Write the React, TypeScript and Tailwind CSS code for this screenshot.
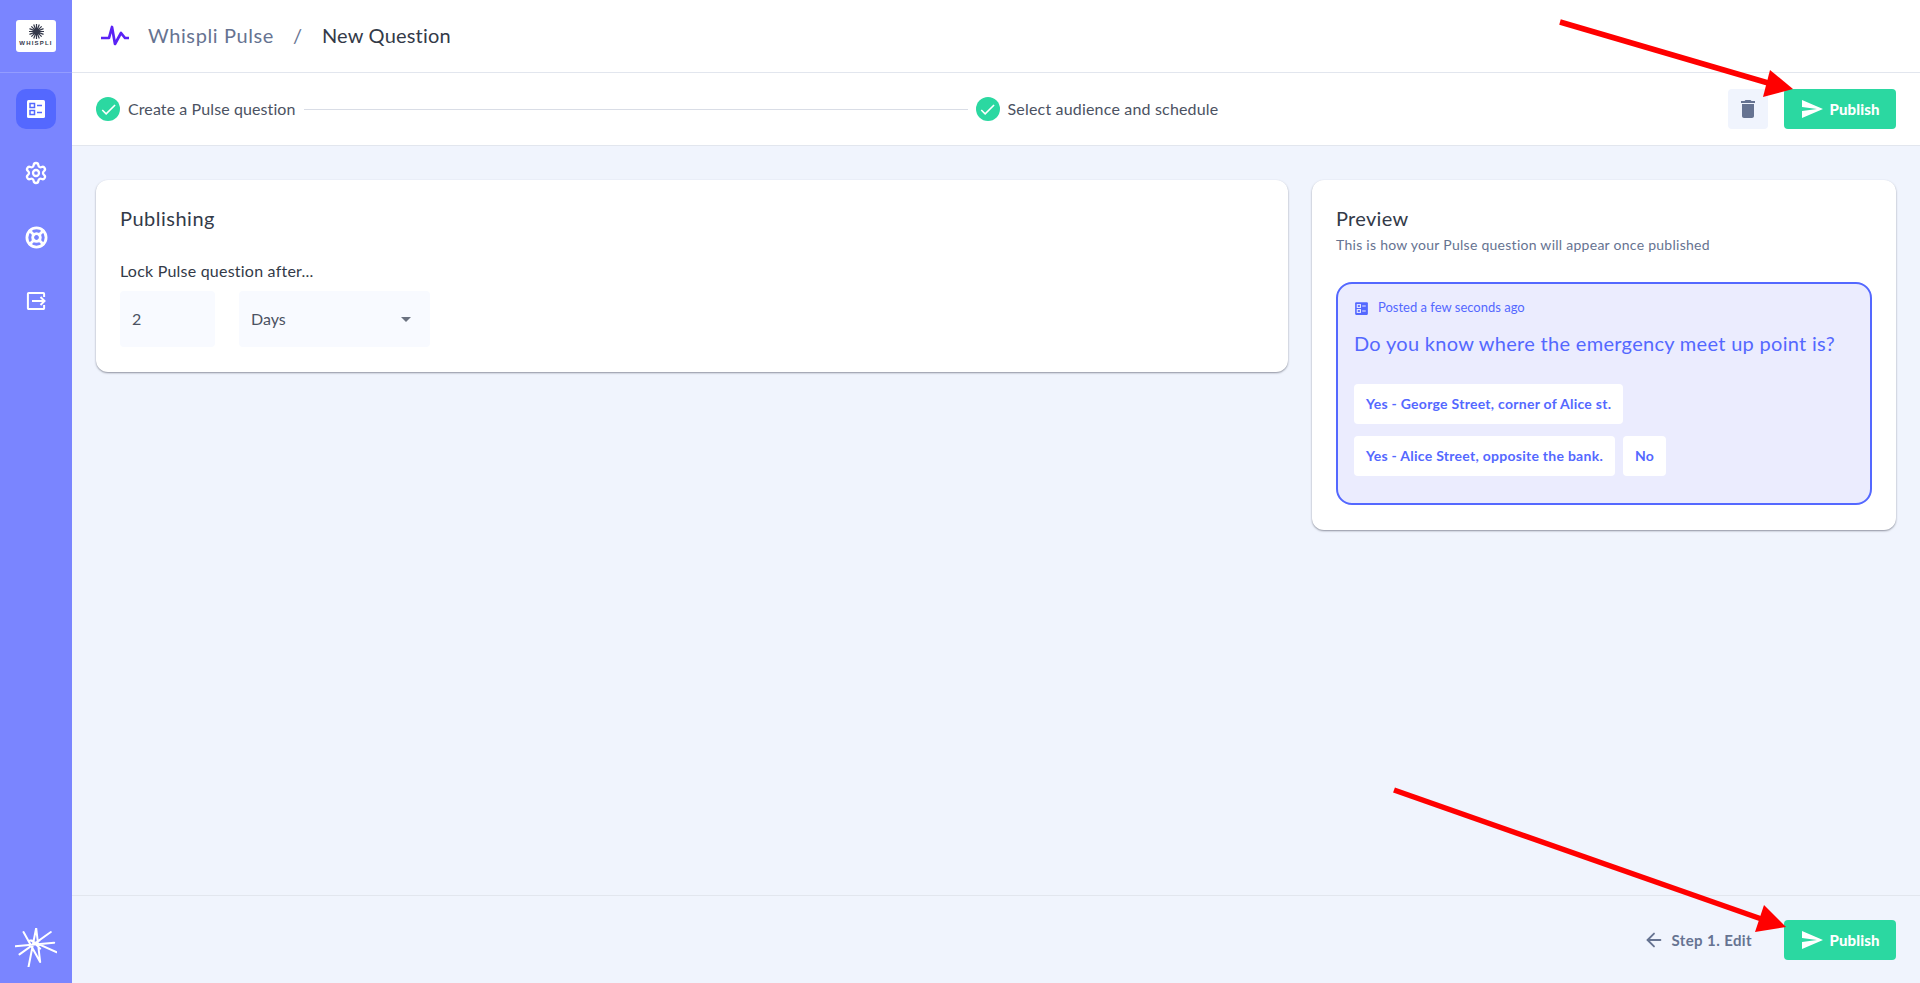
import { ArrowLeft, LifeBuoy, Settings } from 'lucide-react'
import { MdDelete, MdSend, MdArrowDropDown, MdCheck } from 'react-icons/md'

// ─── Small drawings ───────────────────────────────────────────────────────────
function BallotIcon({ size = 24, bg = '#ffffff', fg = '#5468ff' }: { size?: number; bg?: string; fg?: string }) {
  return (
    <svg width={size} height={size} viewBox="0 0 24 24">
      <rect x="3" y="3" width="18" height="18" rx="1.5" fill={bg} />
      <rect x="6" y="6.5" width="4.5" height="4" fill="none" stroke={fg} strokeWidth="1.5" />
      <rect x="6" y="13.5" width="4.5" height="4" fill="none" stroke={fg} strokeWidth="1.5" />
      <path d="M13 8.5h5M13 15.5h5" stroke={fg} strokeWidth="1.7" />
    </svg>
  )
}

function ExitIcon() {
  return (
    <svg width="24" height="24" viewBox="0 0 24 24" fill="none" stroke="#ffffff" strokeWidth="2">
      <path d="M20.1 8V4.7a.8.8 0 0 0-.8-.8H4.7a.8.8 0 0 0-.8.8v14.6a.8.8 0 0 0 .8.8h14.6a.8.8 0 0 0 .8-.8V16" />
      <path d="M8 12h13M16.5 8l4 4-4 4" />
    </svg>
  )
}

function PulseLogo() {
  return (
    <svg width="30" height="22" viewBox="0 0 30 22" fill="none" stroke="#5a22f5" strokeWidth="2.7" strokeLinejoin="round">
      <path d="M1 14h8l3-11 3 17 6-11 4 5h4" />
    </svg>
  )
}

function StarMark() {
  return (
    <svg width="42" height="39" viewBox="45 143 125 117" fill="none" stroke="#ffffff" strokeWidth="6" strokeLinecap="round">
      <path d="M70 155l50 90M108 143l-23 117M152 155L58 222M45 198l117-11M170 216L90 180M108 143l12 102M95 180l25 25M88 200l30-20" />
    </svg>
  )
}

function LogoBadge() {
  return (
    <div className="flex h-8 w-10 flex-col items-center justify-start rounded-[3px] bg-white pt-[4px]">
      <svg width="15" height="15" viewBox="0 0 16 16" fill="none" stroke="#33384a" strokeWidth="1.3">
        <path d="M8 0v16M0 8h16M2.5 2.5l11 11M13.5 2.5l-11 11M5 .5l6 15M11 .5l-6 15M.5 5l15 6M.5 11l15-6" />
      </svg>
      <span className="mt-[1px] text-[6px] leading-[7px] font-black tracking-[1.2px] text-[#33384a] [font-family:'Liberation_Sans',sans-serif]">
        WHISPLI
      </span>
    </div>
  )
}

function CheckCircle() {
  return (
    <span className="flex h-6 w-6 flex-none items-center justify-center rounded-full bg-[#2bd8a1] text-white">
      <MdCheck size={19} />
    </span>
  )
}

function PublishButton() {
  return (
    <button className="flex h-10 w-28 items-center justify-center gap-[5px] rounded bg-[#2bd8a1] text-[15px] font-black tracking-[0.1px] text-white">
      <MdSend size={24} />
      Publish
    </button>
  )
}

function AnswerChip({ label }: { label: string }) {
  return (
    <button className="flex h-10 items-center rounded bg-white px-3 text-sm font-bold tracking-[0.27px] text-[#5468ff]">
      {label}
    </button>
  )
}

// ─── Sidebar ──────────────────────────────────────────────────────────────────
function Sidebar() {
  return (
    <aside className="flex w-[72px] flex-none flex-col items-center bg-[#7a85ff]">
      <div className="flex h-[73px] w-full flex-none justify-center border-b border-[#939cff] pt-5">
        <LogoBadge />
      </div>
      <nav className="mt-4 flex flex-col items-center gap-6">
        <span className="flex h-10 w-10 items-center justify-center rounded-[10px] bg-[#5468ff]">
          <BallotIcon />
        </span>
        <span className="flex h-10 w-10 items-center justify-center text-white">
          <Settings size={24} strokeWidth={2.3} />
        </span>
        <span className="flex h-10 w-10 items-center justify-center text-white">
          <LifeBuoy size={23} strokeWidth={2.9} />
        </span>
        <span className="flex h-10 w-10 items-center justify-center">
          <ExitIcon />
        </span>
      </nav>
      <div className="mt-auto pb-4">
        <StarMark />
      </div>
    </aside>
  )
}

// ─── Page ─────────────────────────────────────────────────────────────────────
export default function App() {
  return (
    <div className="relative flex h-[983px] w-full overflow-hidden bg-[#f0f4fd] text-[#333a48] [font-family:Lato,sans-serif]">
      <Sidebar />

      <main className="flex min-w-0 flex-1 flex-col">
        {/* Title bar */}
        <header className="flex h-[73px] flex-none items-center border-b border-[#e2e6ee] bg-white pb-[2px] pl-[28px]">
          <PulseLogo />
          <span className="ml-[18px] text-[20px] tracking-[0.6px] text-[#667391]">Whispli Pulse</span>
          <span className="ml-[19px] text-[20px] text-[#667391]">/</span>
          <span className="ml-[20px] text-[20px] tracking-[0.2px] text-[#333a48]">New Question</span>
        </header>

        {/* Steps */}
        <div className="flex h-[73px] flex-none items-center border-b border-[#e2e6ee] bg-white pr-6 pl-6">
          <CheckCircle />
          <span className="ml-2 text-base tracking-[0.1px] whitespace-nowrap text-[#4b5262]">Create a Pulse question</span>
          <div className="mx-2 h-px w-[664px] bg-[#d9dde6]" />
          <CheckCircle />
          <span className="ml-2 text-base tracking-[0.18px] whitespace-nowrap text-[#4b5262]">Select audience and schedule</span>
          <button className="ml-auto flex h-10 w-10 items-center justify-center rounded bg-[#f0f4fd] text-[#667391]">
            <MdDelete size={24} />
          </button>
          <div className="ml-4">
            <PublishButton />
          </div>
        </div>

        {/* Cards */}
        <div className="flex flex-1 items-start gap-6 p-6 pt-[34px]">
          <section className="h-[192px] w-[1192px] rounded-xl bg-white px-6 pt-[23px] pb-6 shadow-[0_1px_2px_rgba(60,64,80,0.55)]">
            <h2 className="text-[20px] leading-[30px] tracking-[0.5px] text-[#333a48]">Publishing</h2>
            <label className="mt-[26px] block text-base leading-6 tracking-[0.22px] text-[#333a48]">Lock Pulse question after...</label>
            <div className="mt-[8px] flex gap-6">
              <div className="flex h-14 w-[95px] items-center rounded bg-[#f8faff] px-3 text-base text-[#4b5262]">2</div>
              <div className="flex h-14 w-[191px] items-center justify-between rounded bg-[#f8faff] pr-[12px] pl-3 text-base text-[#4b5262]">
                Days
                <MdArrowDropDown size={24} className="text-[#6b7280]" />
              </div>
            </div>
          </section>

          <section className="h-[350px] w-[584px] rounded-xl bg-white px-6 pt-[23px] pb-6 shadow-[0_1px_2px_rgba(60,64,80,0.55)]">
            <h2 className="text-[20px] leading-[30px] tracking-[0.3px] text-[#333a48]">Preview</h2>
            <p className="mt-[2px] text-sm leading-5 tracking-[0.27px] text-[#667391]">This is how your Pulse question will appear once published</p>
            <div className="mt-[27px] h-[223px] rounded-2xl border-2 border-[#5468ff] bg-[#ebecfe] px-4 pt-[16px]">
              <div className="flex h-4 items-center gap-[8px] text-[13px] text-[#5468ff]">
                <span className="-ml-px">
                  <BallotIcon size={17} bg="#5468ff" fg="#ebecfe" />
                </span>
                Posted a few seconds ago
              </div>
              <p className="mt-[12px] text-[20px] leading-[30px] tracking-[0.3px] text-[#5468ff]">
                Do you know where the emergency meet up point is?
              </p>
              <div className="mt-[26px] flex flex-wrap gap-x-2 gap-y-3">
                <div className="w-full">
                  <span className="inline-flex">
                    <AnswerChip label="Yes - George Street, corner of Alice st." />
                  </span>
                </div>
                <AnswerChip label="Yes - Alice Street, opposite the bank." />
                <AnswerChip label="No" />
              </div>
            </div>
          </section>
        </div>

        {/* Footer */}
        <footer className="flex h-[88px] flex-none items-start justify-end gap-8 border-t border-[#e2e6ee] px-6 pt-6">
          <button className="flex h-10 items-center gap-[6px] text-[15px] font-bold tracking-[0.4px] text-[#667391]">
            <ArrowLeft size={22} />
            Step 1. Edit
          </button>
          <PublishButton />
        </footer>
      </main>

      {/* Red annotation arrows drawn over the page */}
      <svg className="pointer-events-none absolute inset-0" width="1920" height="983" viewBox="0 0 1920 983">
        <path d="M1560 22L1775 85" stroke="#ff0000" strokeWidth="5.5" />
        <polygon points="1793,89 1770,70 1763,97" fill="#ff0000" />
        <path d="M1394 790L1770 922" stroke="#ff0000" strokeWidth="5.5" />
        <polygon points="1786,927 1764,905 1755,932" fill="#ff0000" />
      </svg>
    </div>
  )
}
